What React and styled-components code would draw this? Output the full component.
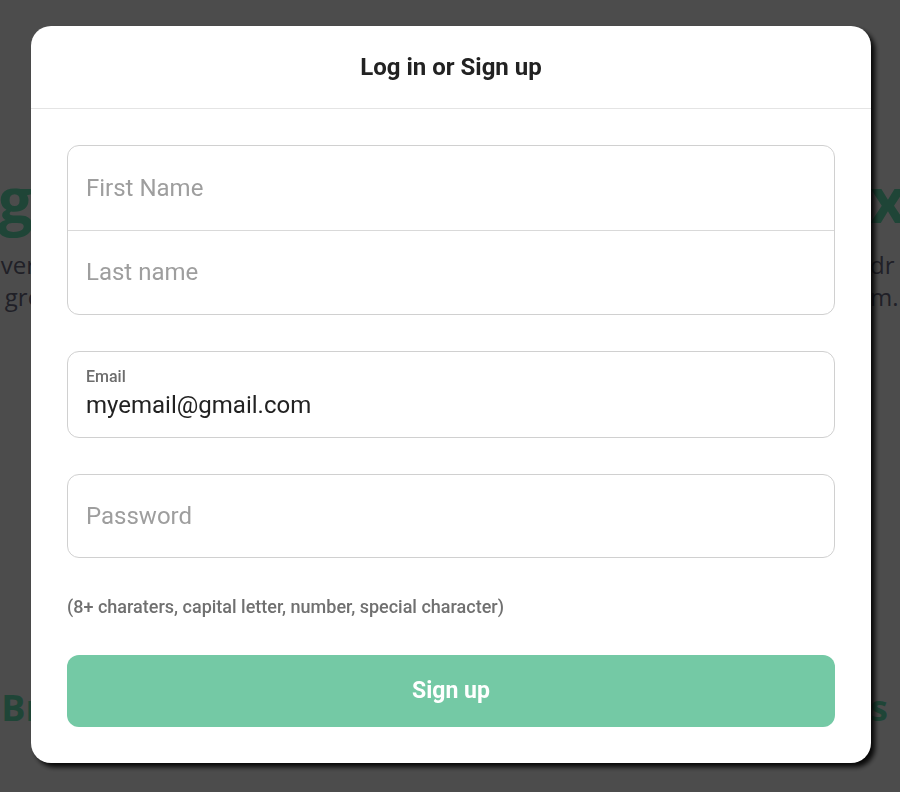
import React from "react";
import styled, { createGlobalStyle } from "styled-components";

const GlobalStyle = createGlobalStyle`
  html, body {
    margin: 0;
    padding: 0;
    height: 100%;
    overflow: hidden;
  }
  body {
    background: #fff;
    font-family: Roboto, "Liberation Sans", sans-serif;
  }
  * {
    box-sizing: border-box;
  }
`;

// page behind the dialog, only its edges show
const Page = styled.main`
  height: 100vh;
  padding-top: 159px;
  font-family: "Open Sans", "Noto Sans", sans-serif;
  overflow: hidden;
`;

const BgRow = styled.div`
  display: flex;
  justify-content: space-between;
  white-space: nowrap;
  font-size: ${(p) => p.$size}px;
  line-height: ${(p) => p.$lh}px;
  font-weight: ${(p) => (p.$bold ? 700 : 400)};
  color: ${(p) => (p.$green ? "#6ae8b8" : "#6c6c84")};
  margin-top: ${(p) => p.$gap || 0}px;
`;

const LeftEdge = styled.span`
  display: flex;
  justify-content: flex-end;
  width: ${(p) => p.$width}px;
`;

const RightEdge = styled.span`
  width: 30px;
`;

const Backdrop = styled.div`
  position: fixed;
  inset: 0;
  background: rgba(0, 0, 0, 0.7);
  display: flex;
  align-items: center;
  justify-content: center;
`;

const Dialog = styled.section`
  width: 840px;
  margin: 0 0 4px 2px;
  background: #fff;
  border-radius: 20px;
  box-shadow: 4px 4px 5px rgba(0, 0, 0, 0.9);
  overflow: hidden;
`;

const Header = styled.header`
  height: 83px;
  display: flex;
  align-items: center;
  justify-content: center;
  border-bottom: 1px solid #e4e4e4;
`;

const Title = styled.h2`
  margin: 0;
  font-size: 24px;
  font-weight: 700;
  color: #222;
`;

const Form = styled.form`
  display: flex;
  flex-direction: column;
  gap: 36px;
  padding: 36px;
`;

const Group = styled.div`
  display: flex;
  flex-direction: column;
  border: 1px solid #d0d0d0;
  border-radius: 12px;
  overflow: hidden;
`;

const Input = styled.input`
  width: 100%;
  height: ${(p) => p.$height || 84}px;
  padding: 0 18px;
  border: none;
  border-top: ${(p) => (p.$divided ? "1px solid #d9d9d9" : "none")};
  outline: none;
  background: transparent;
  font-family: Roboto, "Liberation Sans", sans-serif;
  font-size: 24px;
  color: #222;

  &::placeholder {
    color: #9e9e9e;
  }
`;

const Box = styled.div`
  border: 1px solid #d0d0d0;
  border-radius: 12px;
`;

const LabelBox = styled.label`
  display: flex;
  flex-direction: column;
  padding: 15px 18px 17px;
  border: 1px solid #d0d0d0;
  border-radius: 12px;
`;

const LabelText = styled.span`
  font-size: 16px;
  line-height: 19px;
  font-weight: 500;
  color: #6d6d6d;
  margin-bottom: 4px;
`;

const ValueInput = styled(Input)`
  height: 30px;
  line-height: 30px;
  padding: 0;
`;

const Hint = styled.p`
  margin: 0;
  font-size: 18px;
  line-height: 25px;
  font-weight: 500;
  color: #707070;
`;

const SubmitButton = styled.button`
  height: 72px;
  border: none;
  border-radius: 12px;
  background: #74c9a5;
  color: #fff;
  font-family: Roboto, "Liberation Sans", sans-serif;
  font-size: 23px;
  font-weight: 700;
  cursor: pointer;
`;

export default function App() {
  return (
    <>
      <GlobalStyle />
      <Page>
        <BgRow $size={62} $lh={80} $bold $green>
          <LeftEdge $width={33}>Amazing</LeftEdge>
          <RightEdge>x</RightEdge>
        </BgRow>
        <BgRow $size={24} $lh={32} $gap={10}>
          <LeftEdge $width={36}>Whenever</LeftEdge>
          <RightEdge>dr</RightEdge>
        </BgRow>
        <BgRow $size={24} $lh={32}>
          <LeftEdge $width={63}>and great</LeftEdge>
          <RightEdge>m.</RightEdge>
        </BgRow>
        <BgRow $size={36} $lh={44} $bold $green $gap={373}>
          <LeftEdge $width={134}>Browse</LeftEdge>
          <RightEdge>s</RightEdge>
        </BgRow>
      </Page>

      <Backdrop>
        <Dialog>
          <Header>
            <Title>Log in or Sign up</Title>
          </Header>
          <Form onSubmit={(e) => e.preventDefault()}>
            <Group>
              <Input placeholder="First Name" />
              <Input $divided placeholder="Last name" />
            </Group>
            <LabelBox>
              <LabelText>Email</LabelText>
              <ValueInput defaultValue="myemail@gmail.com" />
            </LabelBox>
            <Box>
              <Input $height={82} type="password" placeholder="Password" />
            </Box>
            <Hint>(8+ charaters, capital letter, number, special character)</Hint>
            <SubmitButton type="submit">Sign up</SubmitButton>
          </Form>
        </Dialog>
      </Backdrop>
    </>
  );
}
